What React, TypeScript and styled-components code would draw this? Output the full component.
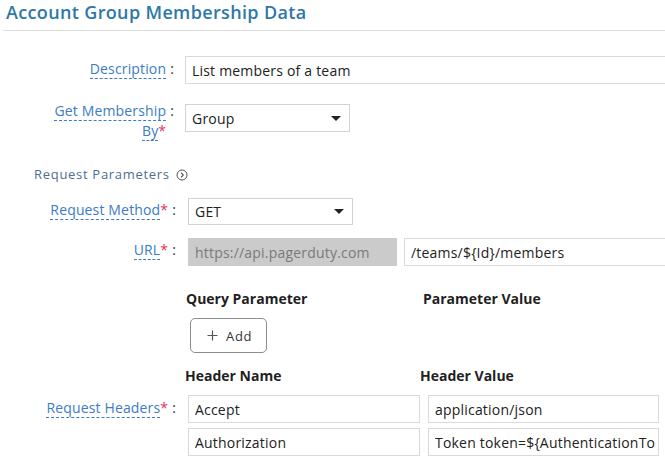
import React from "react";
import styled, { createGlobalStyle } from "styled-components";

const Global = createGlobalStyle`
  html, body { margin: 0; padding: 0; background: #fff; }
  body { font-family: "Open Sans", "Liberation Sans", sans-serif; color: #222; }
  #root { width: 665px; height: 460px; overflow: hidden; }
`;

const Page = styled.div`
  width: 665px;
  height: 460px;
  overflow: hidden;
`;

const Title = styled.h1`
  margin: 0 0 0 3px;
  padding: 0 3px 6px;
  font-size: 18px;
  line-height: 24px;
  font-weight: 600;
  letter-spacing: 0.35px;
  color: #2e78a8;
  border-bottom: 1px solid #dcdcdc;
  white-space: nowrap;
`;

const Form = styled.div`
  display: flex;
  flex-direction: column;
`;

const Row = styled.div<{ $w: number; $g: number; $mt: number }>`
  display: grid;
  grid-template-columns: ${(p) => p.$w}px auto;
  column-gap: ${(p) => p.$g}px;
  align-items: start;
  margin-top: ${(p) => p.$mt}px;
`;

const LabelCol = styled.div<{ $pt: number }>`
  display: flex;
  justify-content: flex-end;
  align-items: flex-start;
  padding-top: ${(p) => p.$pt}px;
  font-size: 14px;
  line-height: 20px;
  letter-spacing: 0.15px;
`;

const LabelText = styled.div<{ $max?: number }>`
  max-width: ${(p) => p.$max ?? 120}px;
  text-align: right;
  color: #3b7cc4;
`;

const Term = styled.span`
  border-bottom: 1px dashed #3b7cc4;
`;

const Star = styled.span`
  color: #e2325a;
`;

const Colon = styled.span`
  margin-left: 4px;
  color: #333;
`;

const Field = styled.div<{ $mt?: number }>`
  margin-top: ${(p) => p.$mt ?? 0}px;
`;

const TextInput = styled.input<{ $w: number; $h?: number }>`
  box-sizing: border-box;
  width: ${(p) => p.$w}px;
  height: ${(p) => p.$h ?? 28}px;
  padding: 0 2px 0 6px;
  border: 1px solid #d9d9d9;
  border-radius: 0;
  background: #fff;
  font-family: "Open Sans", "Liberation Sans", sans-serif;
  font-size: 14px;
  letter-spacing: 0.2px;
  color: #222;
  outline: none;
  display: block;
`;

const GrayInput = styled(TextInput)`
  background: #cbcbcb;
  border-color: #cbcbcb;
  color: #7a7a7a;
`;

const Select = styled.div<{ $h: number }>`
  box-sizing: border-box;
  width: 165px;
  height: ${(p) => p.$h}px;
  padding: 0 8px 0 6px;
  border: 1px solid #d2d2d2;
  background: #fff;
  display: flex;
  align-items: center;
  justify-content: space-between;
  font-size: 14px;
  letter-spacing: 0.2px;
  color: #222;
`;

const Caret = styled.span`
  width: 0;
  height: 0;
  border-left: 5px solid transparent;
  border-right: 5px solid transparent;
  border-top: 5px solid #222;
`;

const SectionTitle = styled.div`
  margin-top: 24px;
  padding-left: 34px;
  display: flex;
  align-items: center;
  gap: 6px;
  font-size: 13px;
  line-height: 18px;
  letter-spacing: 0.7px;
  color: #4e6f8e;
`;

const UrlGroup = styled.div`
  display: flex;
  gap: 7px;
`;

const Headings = styled.div<{ $left: number; $col: number; $mt: number }>`
  display: grid;
  grid-template-columns: ${(p) => p.$col}px auto;
  padding-left: ${(p) => p.$left}px;
  margin-top: ${(p) => p.$mt}px;
  font-size: 14px;
  line-height: 18px;
  font-weight: 700;
  color: #1f1f1f;
`;

const AddRow = styled.div`
  padding-left: 190px;
  margin-top: 10px;
`;

const AddButton = styled.button`
  box-sizing: border-box;
  width: 77px;
  height: 35px;
  border: 1px solid #8c8c8c;
  border-radius: 5px;
  background: #fff;
  display: flex;
  align-items: center;
  padding: 0 0 0 16px;
  gap: 8px;
  font-family: "Open Sans", "Liberation Sans", sans-serif;
  font-size: 13px;
  letter-spacing: 0.7px;
  color: #333;
`;

const HeaderGrid = styled.div`
  display: grid;
  grid-template-columns: 232px 231px;
  column-gap: 8px;
  row-gap: 5px;
`;

const ChevronCircle = () => (
  <svg width="12" height="12" viewBox="0 0 12 12" style={{ marginTop: 2 }}>
    <circle cx="6" cy="6" r="5" fill="none" stroke="#555" strokeWidth="1" />
    <path d="M5 3.6 L7.3 6 L5 8.4" fill="none" stroke="#555" strokeWidth="1.1" />
  </svg>
);

const Plus = () => (
  <svg width="11" height="11" viewBox="0 0 11 11">
    <path d="M5.5 0.5 V10.5 M0.5 5.5 H10.5" stroke="#555" strokeWidth="1.2" />
  </svg>
);

export default function App() {
  return (
    <Page>
      <Global />
      <Title>Account Group Membership Data</Title>
      <Form>
        <Row $w={174} $g={11} $mt={25}>
          <LabelCol $pt={3}>
            <LabelText>
              <Term>Description</Term>
            </LabelText>
            <Colon>:</Colon>
          </LabelCol>
          <Field>
            <TextInput $w={500} readOnly value="List members of a team" />
          </Field>
        </Row>

        <Row $w={174} $g={11} $mt={17}>
          <LabelCol $pt={0}>
            <LabelText>
              <Term>Get Membership By</Term>
              <Star>*</Star>
            </LabelText>
            <Colon>:</Colon>
          </LabelCol>
          <Field $mt={3}>
            <Select $h={28}>
              <span>Group</span>
              <Caret />
            </Select>
          </Field>
        </Row>

        <SectionTitle>
          <span>Request Parameters</span>
          <ChevronCircle />
        </SectionTitle>

        <Row $w={176} $g={12} $mt={15}>
          <LabelCol $pt={2}>
            <LabelText>
              <Term>Request Method</Term>
              <Star>*</Star>
            </LabelText>
            <Colon>:</Colon>
          </LabelCol>
          <Field>
            <Select $h={27}>
              <span>GET</span>
              <Caret />
            </Select>
          </Field>
        </Row>

        <Row $w={176} $g={12} $mt={13}>
          <LabelCol $pt={2}>
            <LabelText>
              <Term>URL</Term>
              <Star>*</Star>
            </LabelText>
            <Colon>:</Colon>
          </LabelCol>
          <Field>
            <UrlGroup>
              <GrayInput $w={209} readOnly value="https://api.pagerduty.com" />
              <TextInput $w={300} readOnly value="/teams/${Id}/members" />
            </UrlGroup>
          </Field>
        </Row>

        <Headings $left={186} $col={237} $mt={24}>
          <span>Query Parameter</span>
          <span>Parameter Value</span>
        </Headings>

        <AddRow>
          <AddButton type="button">
            <Plus />
            <span>Add</span>
          </AddButton>
        </AddRow>

        <Headings $left={185} $col={235} $mt={14}>
          <span>Header Name</span>
          <span>Header Value</span>
        </Headings>

        <Row $w={176} $g={12} $mt={10}>
          <LabelCol $pt={3}>
            <LabelText $max={150}>
              <Term>Request Headers</Term>
              <Star>*</Star>
            </LabelText>
            <Colon>:</Colon>
          </LabelCol>
          <Field>
            <HeaderGrid>
              <TextInput $w={232} readOnly value="Accept" />
              <TextInput $w={231} readOnly value="application/json" />
              <TextInput $w={232} readOnly value="Authorization" />
              <TextInput $w={231} readOnly value="Token token=${AuthenticationToken}" />
            </HeaderGrid>
          </Field>
        </Row>
      </Form>
    </Page>
  );
}
